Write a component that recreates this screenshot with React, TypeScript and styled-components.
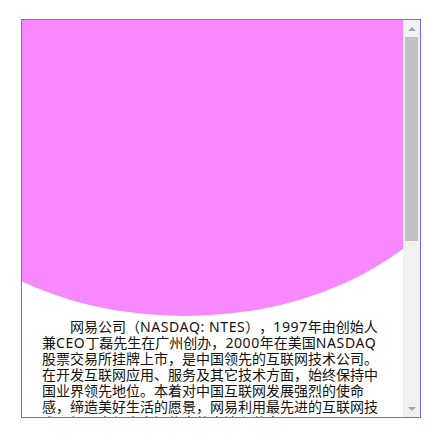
import { useEffect, useRef, useState } from "react";
import styled, { createGlobalStyle } from "styled-components";

const GlobalStyle = createGlobalStyle`
  html, body {
    margin: 0;
    padding: 0;
    background: #fff;
  }
`;

const Page = styled.div`
  padding: 19px 0 0 21px;
`;

const Frame = styled.div`
  box-sizing: border-box;
  display: flex;
  width: 400px;
  height: 399px;
  border: 1px solid #6a6aff;
  background: #fff;
`;

const Viewport = styled.div`
  flex: 1;
  min-width: 0;
  overflow-x: hidden;
  overflow-y: auto;
  scrollbar-width: none;
  &::-webkit-scrollbar {
    display: none;
  }
`;

const Blob = styled.div`
  width: 600px;
  height: 430px;
  margin: -134px 0 0 -137px;
  border-radius: 50%;
  background: #f788fe;
`;

const Intro = styled.p`
  margin: 3px 0 24px;
  padding: 0 20px;
  font-family: "Noto Sans", "Noto Sans CJK SC", sans-serif;
  font-size: 14px;
  line-height: 16px;
  color: #111;
  text-indent: 2em;
  text-spacing-trim: space-all;
`;

// latin runs are a touch wider in the original font
const Latin = styled.span`
  letter-spacing: 0.6px;
`;

const ScrollBar = styled.div`
  display: flex;
  flex-direction: column;
  flex: 0 0 17px;
  background: #f1f1f1;
`;

const ArrowButton = styled.div`
  display: flex;
  align-items: center;
  justify-content: center;
  height: 17px;
  flex: 0 0 17px;
`;

const Track = styled.div`
  flex: 1;
  min-height: 0;
`;

const Thumb = styled.div`
  margin: 0 2px;
  background: #c1c1c1;
`;

const Arrow = ({ down }: { down?: boolean }) => (
  <svg width="8" height="4" viewBox="0 0 8 4">
    <polygon points={down ? "0,0 8,0 4,4" : "0,4 4,0 8,4"} fill="#a3a3a3" />
  </svg>
);

const paragraph =
  "网易公司（NASDAQ: NTES），1997年由创始人兼CEO丁磊先生在广州创办，2000年在美国NASDAQ股票交易所挂牌上市，是中国领先的互联网技术公司。在开发互联网应用、服务及其它技术方面，始终保持中国业界领先地位。本着对中国互联网发展强烈的使命感，缔造美好生活的愿景，网易利用最先进的互联网技术，加强人与人之间信息的交流和共享。";

const renderText = (text: string) =>
  text
    .split(/([A-Za-z0-9: ]+)/)
    .map((part, i) => (i % 2 === 1 ? <Latin key={i}>{part}</Latin> : part));

export default function App() {
  const viewRef = useRef<HTMLDivElement>(null);
  const trackRef = useRef<HTMLDivElement>(null);
  const [thumb, setThumb] = useState({ top: 0, height: 206 });

  const measure = () => {
    const view = viewRef.current;
    const track = trackRef.current;
    if (!view || !track) return;
    const trackLen = track.clientHeight;
    const height = Math.max(20, (trackLen * view.clientHeight) / view.scrollHeight);
    const range = view.scrollHeight - view.clientHeight;
    const top = range > 0 ? ((trackLen - height) * view.scrollTop) / range : 0;
    setThumb({ top, height });
  };

  useEffect(() => {
    measure();
  }, []);

  return (
    <>
      <GlobalStyle />
      <Page>
        <Frame>
          <Viewport ref={viewRef} onScroll={measure}>
            <Blob />
            <Intro>{renderText(paragraph)}</Intro>
            <Intro>{renderText(paragraph)}</Intro>
            <Intro>{renderText(paragraph)}</Intro>
          </Viewport>
          <ScrollBar>
            <ArrowButton>
              <Arrow />
            </ArrowButton>
            <Track ref={trackRef}>
              <Thumb style={{ marginTop: thumb.top, height: thumb.height }} />
            </Track>
            <ArrowButton>
              <Arrow down />
            </ArrowButton>
          </ScrollBar>
        </Frame>
      </Page>
    </>
  );
}
